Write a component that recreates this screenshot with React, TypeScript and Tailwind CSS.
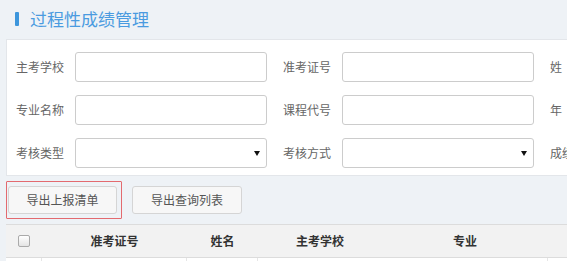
const font = "font-['Microsoft_YaHei','Noto_Sans_CJK_SC',sans-serif]";

function Field({ label, select }: { label: string; select?: boolean }) {
  return (
    <div className="flex items-center">
      <span className="w-[59px] shrink-0 text-[12px] text-[#666]">{label}</span>
      <div className="relative h-[30px] w-[192px] rounded-[3px] border border-[#ccc] bg-white">
        {select ? (
          <span className="absolute right-[6px] top-[12px] h-0 w-0 border-x-[3px] border-t-[5px] border-x-transparent border-t-[#111]" />
        ) : null}
      </div>
    </div>
  );
}

export default function App() {
  const rows = [
    [
      { label: "主考学校" },
      { label: "准考证号" },
      { label: "姓" },
    ],
    [
      { label: "专业名称" },
      { label: "课程代号" },
      { label: "年" },
    ],
    [
      { label: "考核类型", select: true },
      { label: "考核方式", select: true },
      { label: "成绩" },
    ],
  ];

  return (
    <div className={`h-[261px] w-[567px] overflow-hidden bg-[#eef2f6] ${font}`}>
      <div className="w-[760px] pl-[6px]">
        <div className="flex h-[39px] items-center gap-[11px] pl-[9px] pb-[2px]">
          <span className="h-[14px] w-[4px] rounded-[1px] bg-[#3d96dc]" />
          <span className="text-[17px] leading-none text-[#4a9be0]">过程性成绩管理</span>
        </div>

        <div className="flex flex-col gap-[13px] border border-[#e3e6ea] bg-white pb-[7px] pl-[9px] pt-[12px]">
          {rows.map((row, i) => (
            <div key={i} className="flex gap-[16px]">
              {row.map((f) => (
                <Field key={f.label} label={f.label} select={f.select} />
              ))}
            </div>
          ))}
        </div>

        <div className="flex h-[48px] items-center gap-[10px]">
          <div className="rounded-[1px] border border-[#e36a6f] px-[1px] py-[4px] pr-[4px]">
            <button className="h-[28px] w-[109px] rounded-[3px] border border-[#d5d5d5] bg-[#f7f7f7] text-[12px] text-[#555]">
              导出上报清单
            </button>
          </div>
          <button className="h-[28px] w-[110px] rounded-[3px] border border-[#d5d5d5] bg-[#f7f7f7] text-[12px] text-[#555]">
            导出查询列表
          </button>
        </div>

        <div className="flex h-[33px] items-center border-t border-[#dcdcdc] bg-[#f2f2f2] text-[12px] font-bold text-[#333]">
          <div className="flex w-[36px] justify-center">
            <span className="h-[12px] w-[12px] rounded-[2px] border border-[#aaa] bg-gradient-to-b from-white to-[#e4e4e4]" />
          </div>
          <div className="w-[145px] text-center">准考证号</div>
          <div className="w-[71px] text-center">姓名</div>
          <div className="w-[124px] text-center">主考学校</div>
          <div className="w-[166px] text-center">专业</div>
        </div>
        <div className="flex h-[10px] border-t border-[#dcdcdc] bg-white">
          <div className="w-[36px] border-r border-[#e6e6e6]" />
          <div className="w-[145px] border-r border-[#e6e6e6]" />
          <div className="w-[71px] border-r border-[#e6e6e6]" />
          <div className="w-[124px]" />
          <div className="w-[166px] border-r border-[#e6e6e6]" />
        </div>
      </div>
    </div>
  );
}
